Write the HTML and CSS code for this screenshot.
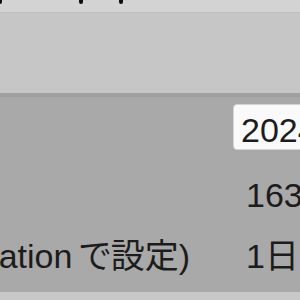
FILE: index.html
```html
<!DOCTYPE html>
<html lang="ja">
<head>
  <meta charset="UTF-8">
  <title>設定</title>
  <link rel="stylesheet" href="styles.css">
</head>
<body>
  <div class="page">
    <div class="header">
      <span class="dot"></span>
      <span class="dot"></span>
      <span class="dot"></span>
    </div>
    <div class="toolbar"></div>
    <div class="form">
      <div class="row">
        <div class="label"></div>
        <div class="value">
          <input class="field" type="text" value="2024-01-01">
        </div>
      </div>
      <div class="row">
        <div class="label"></div>
        <div class="value">163</div>
      </div>
      <div class="row">
        <div class="label">有効期限 (Expiration&thinsp;で設定)</div>
        <div class="value">1日</div>
      </div>
    </div>
    <div class="footer"></div>
  </div>
</body>
</html>
```

FILE: styles.css
```css
body {
  margin: 0;
  font-family: "Liberation Sans", "Noto Sans CJK JP", sans-serif;
  color: #1c1c1c;
}

.page {
  width: 300px;
  height: 300px;
  overflow: hidden;
  display: flex;
  flex-direction: column;
  background: #a9a9a9;
}

.header {
  height: 12px;
  flex-shrink: 0;
  background: #d3d3d3;
  border-bottom: 1px solid #bdbdbd;
  display: flex;
  align-items: flex-start;
}

.dot {
  width: 4px;
  height: 4px;
  border-radius: 0 0 2px 2px;
  background: #0e0e0e;
}

.dot:nth-child(1) { margin-left: -2px; }
.dot:nth-child(2) { margin-left: 77px; }
.dot:nth-child(3) { margin-left: 36px; }

.toolbar {
  height: 80px;
  flex-shrink: 0;
  background: #c6c6c6;
  border-bottom: 4px solid #a0a0a0;
}

.form {
  flex: 1;
  padding-top: 7px;
  background: #a9a9a9;
}

.row {
  height: 61px;
  display: grid;
  grid-template-columns: 190px 1fr;
  column-gap: 56px;
  align-items: center;
  font-size: 34px;
  line-height: 61px;
  white-space: nowrap;
}

.label {
  display: flex;
  justify-content: flex-end;
  font-feature-settings: "palt";
}

.field {
  display: block;
  box-sizing: border-box;
  width: 120px;
  height: 46px;
  margin: -15px 0 0 -13px;
  padding: 6px 7px 0;
  font: 34px/38px "Liberation Sans", sans-serif;
  color: #1c1c1c;
  background: #fafafa;
  border: 1px solid #d4d4d4;
  border-radius: 4px;
  outline: none;
}

.footer {
  height: 8px;
  flex-shrink: 0;
  background: #c8c8c8;
}
```
